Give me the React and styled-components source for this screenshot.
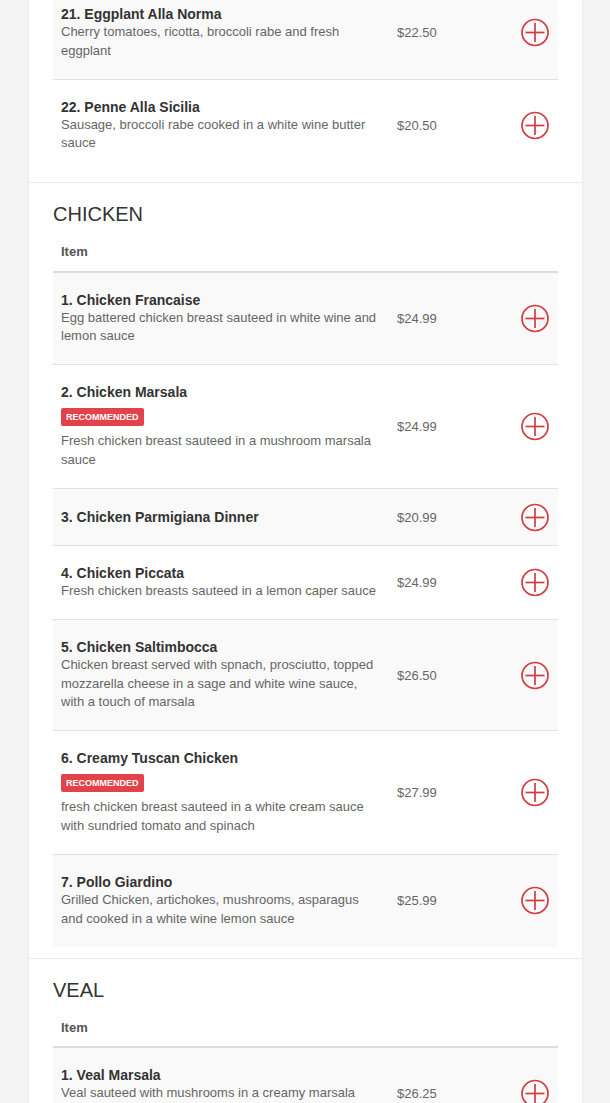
import React from 'react';
import styled, { createGlobalStyle } from 'styled-components';

const GlobalStyle = createGlobalStyle`
  html, body {
    margin: 0;
    padding: 0;
    background: #f3f3f3;
    font-family: 'Liberation Sans', Arial, Helvetica, sans-serif;
    color: #333;
  }
`;

const Page = styled.div`
  margin: -14px 27px 0 28px;
`;

const Section = styled.section`
  background: #fff;
  border: 1px solid #ebebeb;
  padding: ${(p) => (p.$partial ? '0 24px 11px' : '20px 24px 11px')};

  & + & {
    margin-top: -1px;
  }
`;

const Heading = styled.h3`
  margin: 0 0 7px;
  font-size: 20px;
  line-height: 22px;
  font-weight: 400;
  color: #333;
  text-transform: uppercase;
`;

const Row = styled.div`
  display: grid;
  grid-template-columns: 336px 1fr 45px;
  align-items: center;
  background: transparent;

  & + & {
    border-top: 1px solid #e2e2e2;
  }
`;

const Body = styled.div`
  ${Row}:nth-child(odd) {
    background: #f9f9f9;
  }
`;

const HeadRow = styled.div`
  border-bottom: 2px solid #dcdcdc;
  padding: 11px 8px 9px;
  font-size: 13px;
  line-height: 18.57px;
  font-weight: 700;
  color: #555;
`;

const ItemCell = styled.div`
  padding: 18px 8px 18.5px;
`;

const ItemName = styled.div`
  font-size: 14px;
  line-height: 18px;
  font-weight: 700;
  color: #333;
`;

const Badge = styled.span`
  display: inline-block;
  margin: 7px 0 6px;
  padding: 0 5px;
  height: 18px;
  line-height: 18px;
  background: #e2434b;
  color: #fff;
  font-size: 9px;
  font-weight: 700;
  border-radius: 2px;
  text-transform: uppercase;
  vertical-align: top;
`;

const Description = styled.div`
  font-size: 13px;
  line-height: 18.57px;
  color: #666;
`;

const Price = styled.div`
  padding: 0 8px;
  font-size: 13px;
  color: #666;
`;

const AddCell = styled.div`
  display: flex;
  justify-content: flex-end;
  padding: 13.5px 9px 13.5px 8px;
`;

const AddButton = styled.button`
  display: block;
  width: 28px;
  height: 29px;
  padding: 0;
  border: 0;
  background: none;
  cursor: pointer;
  color: #d23b42;
`;

const PlusIcon = () => (
  <svg width="28" height="29" viewBox="0 0 28 29" fill="none" stroke="currentColor" strokeWidth="1.7">
    <circle cx="14" cy="14.5" r="13" />
    <line x1="14" y1="5" x2="14" y2="24" />
    <line x1="4.5" y1="14.5" x2="23.5" y2="14.5" />
  </svg>
);

const menu = [
  {
    partial: true,
    items: [
      { name: '21. Eggplant Alla Norma', desc: 'Cherry tomatoes, ricotta, broccoli rabe and fresh eggplant', price: '$22.50' },
      { name: '22. Penne Alla Sicilia', desc: 'Sausage, broccoli rabe cooked in a white wine butter sauce', price: '$20.50' },
    ],
  },
  {
    title: 'Chicken',
    items: [
      { name: '1. Chicken Francaise', desc: 'Egg battered chicken breast sauteed in white wine and lemon sauce', price: '$24.99' },
      { name: '2. Chicken Marsala', badge: true, desc: 'Fresh chicken breast sauteed in a mushroom marsala sauce', price: '$24.99' },
      { name: '3. Chicken Parmigiana Dinner', price: '$20.99' },
      { name: '4. Chicken Piccata', desc: 'Fresh chicken breasts sauteed in a lemon caper sauce', price: '$24.99' },
      { name: '5. Chicken Saltimbocca', desc: 'Chicken breast served with spnach, prosciutto, topped mozzarella cheese in a sage and white wine sauce, with a touch of marsala', price: '$26.50' },
      { name: '6. Creamy Tuscan Chicken', badge: true, desc: 'fresh chicken breast sauteed in a white cream sauce with sundried tomato and spinach', price: '$27.99' },
      { name: '7. Pollo Giardino', desc: 'Grilled Chicken, artichokes, mushrooms, asparagus and cooked in a white wine lemon sauce', price: '$25.99' },
    ],
  },
  {
    title: 'Veal',
    items: [
      { name: '1. Veal Marsala', desc: 'Veal sauteed with mushrooms in a creamy marsala wine sauce', price: '$26.25' },
      { name: '2. Veal Francaise', desc: 'Egg battered veal sauteed in white wine and lemon sauce', price: '$26.25' },
      { name: '3. Veal Parmigiana Dinner', price: '$25.99' },
    ],
  },
];

const renderItem = (item) => (
  <Row key={item.name}>
    <ItemCell>
      <ItemName>{item.name}</ItemName>
      {item.badge && <Badge>Recommended</Badge>}
      {item.desc && <Description>{item.desc}</Description>}
    </ItemCell>
    <Price>{item.price}</Price>
    <AddCell>
      <AddButton aria-label={`Add ${item.name}`}>
        <PlusIcon />
      </AddButton>
    </AddCell>
  </Row>
);

const App = () => (
  <>
    <GlobalStyle />
    <Page>
      {menu.map((section, i) => (
        <Section key={i} $partial={section.partial}>
          {section.title && (
            <>
              <Heading>{section.title}</Heading>
              <HeadRow>Item</HeadRow>
            </>
          )}
          <Body>{section.items.map(renderItem)}</Body>
        </Section>
      ))}
    </Page>
  </>
);

export default App;
